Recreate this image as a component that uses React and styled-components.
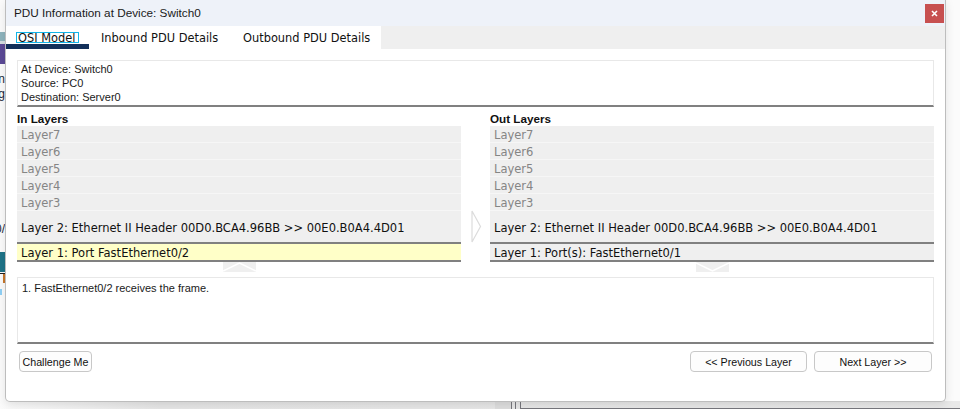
import React from 'react';
import styled, { createGlobalStyle } from 'styled-components';

const GlobalStyle = createGlobalStyle`
  html, body {
    margin: 0;
    padding: 0;
    height: 409px;
    overflow: hidden;
    background: #ffffff;
  }
`;

const Desktop = styled.div`
  position: relative;
  width: 960px;
  height: 409px;
  overflow: hidden;
  background: #fbfbfb;
  padding: 0 14px 8px 5px;
  box-sizing: border-box;
`;

const BackdropBit = styled.div`
  position: absolute;
  left: ${(p) => p.$x}px;
  top: ${(p) => p.$y}px;
  width: ${(p) => p.$w}px;
  height: ${(p) => p.$h}px;
  background: ${(p) => p.$bg};
`;

const BackdropText = styled.div`
  position: absolute;
  right: ${(p) => 960 - p.$x}px;
  top: ${(p) => p.$y}px;
  font: 12px/14px 'Liberation Sans', Arial, sans-serif;
  color: #1c2a3a;
  white-space: nowrap;
`;

const Backdrop = () => (
  <>
    <BackdropBit $x={0} $y={32} $w={5} $h={9} $bg="#8fb4bd" />
    <BackdropBit $x={0} $y={41} $w={5} $h={3} $bg="#d5dfe2" />
    <BackdropBit $x={0} $y={44} $w={5} $h={20} $bg="#5b4a96" />
    <BackdropBit $x={0} $y={252} $w={5} $h={20} $bg="#1f7488" />
    <BackdropBit $x={0} $y={273} $w={5} $h={1} $bg="#222222" />
    <BackdropBit $x={3} $y={274} $w={2} $h={9} $bg="#c8772a" />
    <BackdropBit $x={0} $y={289} $w={2} $h={6} $bg="#8fd0f5" />
    <BackdropText $x={5} $y={72}>n</BackdropText>
    <BackdropText $x={5} $y={87}>g</BackdropText>
    <BackdropText $x={5} $y={222}>0/</BackdropText>
    <BackdropBit $x={0} $y={401} $w={960} $h={8} $bg="linear-gradient(to right, #fbfbfb 0, #e6e6e6 160px, #e9e9e9 100%)" />
    <BackdropBit $x={495} $y={401} $w={16} $h={8} $bg="#dedede" />
    <BackdropBit $x={511} $y={401} $w={1} $h={8} $bg="#77777d" />
    <BackdropBit $x={515} $y={401} $w={1} $h={8} $bg="#77777d" />
    <BackdropBit $x={520} $y={401} $w={1} $h={8} $bg="#77777d" />
    <BackdropBit $x={520} $y={408} $w={440} $h={1} $bg="#77777d" />
  </>
);

const Dialog = styled.div`
  position: relative;
  width: 941px;
  height: 402px;
  box-sizing: border-box;
  background: #ffffff;
  border: 1px solid #bdbdbd;
  border-top: none;
  border-radius: 0 0 5px 5px;
  box-shadow: 0 3px 10px rgba(0, 0, 0, 0.1);
  display: flex;
  flex-direction: column;
`;

const TitleBar = styled.div`
  height: 26px;
  flex: none;
  background: #eef2f9;
  display: flex;
  align-items: center;
  justify-content: space-between;
  padding: 0 1px 0 8px;
  font: 11.75px/24px 'Liberation Sans', Arial, sans-serif;
  color: #1a1a1a;
`;

const CloseButton = styled.button`
  width: 19px;
  height: 19px;
  padding: 0;
  border: none;
  background: #c75050;
  color: #ffffff;
  display: flex;
  align-items: center;
  justify-content: center;
`;

const TabStrip = styled.div`
  height: 23px;
  flex: none;
  background: #efefef;
  display: flex;
`;

const Tabs = styled.div`
  display: flex;
  background: #ffffff;
  width: 375px;
`;

const Tab = styled.div`
  box-sizing: border-box;
  height: 23px;
  width: ${(p) => p.$w}px;
  padding-left: ${(p) => p.$pad}px;
  border-bottom: 5px solid ${(p) => (p.$active ? '#12305a' : 'transparent')};
  font: 11.4px/25px 'DejaVu Sans', Verdana, sans-serif;
  color: #111111;
  white-space: nowrap;
`;

const FocusLabel = styled.span`
  display: inline-block;
  line-height: 10px;
  height: 9px;
  margin-left: 1px;
  padding: 0 3px 0 1px;
  outline: 1px solid #12b5e8;
  vertical-align: 0;
`;

const Content = styled.div`
  flex: 1;
  padding: 11px 11px 0 11px;
  display: flex;
  flex-direction: column;
`;

const TextBox = styled.div`
  box-sizing: border-box;
  width: 917px;
  height: ${(p) => p.$h}px;
  flex: none;
  margin-top: ${(p) => p.$top || 0}px;
  border: 1px solid #e8e8e8;
  border-bottom: 2px solid #808080;
  padding: ${(p) => p.$pad};
  font: 11px/14px 'Liberation Sans', Arial, sans-serif;
  color: #1a1a1a;
`;

const Columns = styled.div`
  display: grid;
  grid-template-columns: 444px 29px 444px;
  margin-top: 5px;
`;

const LayerColumn = styled.div`
  display: flex;
  flex-direction: column;
  align-items: stretch;
`;

const ColumnTitle = styled.div`
  font: bold 11.7px/14px 'Liberation Sans', Arial, sans-serif;
  color: #111111;
  height: 14px;
`;

const LayerRow = styled.div`
  box-sizing: border-box;
  height: 17px;
  background: #efefef;
  border-bottom: 1px solid #f6f6f6;
  padding-left: 4px;
  font: 11.5px/18px 'DejaVu Sans', Verdana, sans-serif;
  color: #858585;
`;

const ActiveRow = styled.div`
  box-sizing: border-box;
  height: 33px;
  background: #efefef;
  border-bottom: 2px solid #808080;
  padding-left: 4px;
  font: 11.5px/34px 'DejaVu Sans', Verdana, sans-serif;
  color: #111111;
  white-space: nowrap;
`;

const PortRow = styled.div`
  box-sizing: border-box;
  height: 18px;
  background: ${(p) => (p.$highlight ? '#ffffc8' : '#efefef')};
  border-bottom: 2px solid #808080;
  padding-left: 4px;
  font: 11.5px/18px 'DejaVu Sans', Verdana, sans-serif;
  color: #111111;
`;

const ToggleTab = styled.div`
  width: 33px;
  height: 10px;
  align-self: center;
  background: #efefef;
  display: flex;
`;

const Middle = styled.div`
  display: flex;
  justify-content: center;
  padding-top: 98px;
  padding-left: 1px;
`;

const Footer = styled.div`
  display: flex;
  justify-content: space-between;
  padding: 7px 2px 0 2px;
`;

const FooterGroup = styled.div`
  display: flex;
  gap: 7px;
`;

const PlainButton = styled.button`
  box-sizing: border-box;
  width: ${(p) => p.$w}px;
  height: 21px;
  padding: 1px 0 0;
  background: #fdfdfd;
  border: 1px solid #c8c8c8;
  border-radius: 4px;
  font: 10.7px/18px 'Liberation Sans', Arial, sans-serif;
  color: #111111;
`;

const Chevron = ({ down }) => (
  <svg width="33" height="10" viewBox="0 0 33 10">
    <path
      d={down ? 'M0 1 L16.5 9 L33 1' : 'M0 9 L16.5 1 L33 9'}
      fill="none"
      stroke="#ffffff"
      strokeWidth="1.5"
    />
  </svg>
);

const layers = ['Layer7', 'Layer6', 'Layer5', 'Layer4', 'Layer3'];
const header = 'Layer 2: Ethernet II Header 00D0.BCA4.96BB >> 00E0.B0A4.4D01';

const Layers = ({ title, port, highlight, down }) => (
  <LayerColumn>
    <ColumnTitle>{title}</ColumnTitle>
    {layers.map((name) => (
      <LayerRow key={name}>{name}</LayerRow>
    ))}
    <ActiveRow>{header}</ActiveRow>
    <PortRow $highlight={highlight}>{port}</PortRow>
    <ToggleTab>
      <Chevron down={down} />
    </ToggleTab>
  </LayerColumn>
);

const App = () => (
  <Desktop>
    <GlobalStyle />
    <Backdrop />
    <Dialog>
      <TitleBar>
        PDU Information at Device: Switch0
        <CloseButton>
          <svg width="7" height="7" viewBox="0 0 7 7">
            <path d="M1 1 L6 6 M6 1 L1 6" stroke="#ffffff" strokeWidth="1.6" />
          </svg>
        </CloseButton>
      </TitleBar>
      <TabStrip>
        <Tabs>
          <Tab $w={83} $pad={10} $active>
            <FocusLabel>OSI Model</FocusLabel>
          </Tab>
          <Tab $w={154} $pad={12}>Inbound PDU Details</Tab>
          <Tab $w={138} $pad={0}>Outbound PDU Details</Tab>
        </Tabs>
      </TabStrip>
      <Content>
        <TextBox $h={47} $pad="1px 3px">
          At Device: Switch0
          <br />
          Source: PC0
          <br />
          Destination: Server0
        </TextBox>
        <Columns>
          <Layers title="In Layers" port="Layer 1: Port FastEthernet0/2" highlight />
          <Middle>
            <svg width="11" height="33" viewBox="0 0 11 33">
              <path d="M1 1 L9.5 16.5 L1 32 Z" fill="#ffffff" stroke="#dcdcdc" strokeWidth="1.2" />
            </svg>
          </Middle>
          <Layers title="Out Layers" port="Layer 1: Port(s): FastEthernet0/1" down />
        </Columns>
        <TextBox $h={67} $top={5} $pad="3px 4px">1. FastEthernet0/2 receives the frame.</TextBox>
        <Footer>
          <PlainButton $w={73}>Challenge Me</PlainButton>
          <FooterGroup>
            <PlainButton $w={117}>&lt;&lt; Previous Layer</PlainButton>
            <PlainButton $w={118}>Next Layer &gt;&gt;</PlainButton>
          </FooterGroup>
        </Footer>
      </Content>
    </Dialog>
  </Desktop>
);

export default App;
